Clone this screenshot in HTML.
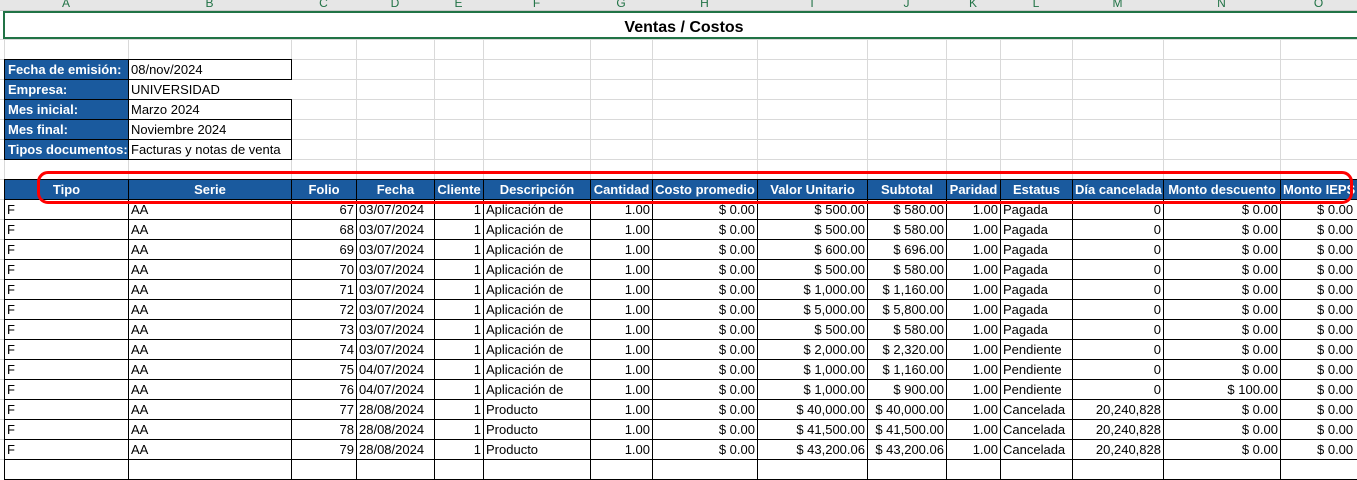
<!DOCTYPE html>
<html><head><meta charset="utf-8"><style>
*{margin:0;padding:0;box-sizing:border-box}
body{width:1357px;height:464px;overflow:hidden;background:#fff;position:relative;font-family:"Liberation Sans",sans-serif;font-size:13px;color:#000}
.grid{position:absolute;left:0;top:39px;width:1357px;height:425px;background:repeating-linear-gradient(to bottom,#d9d9d9 0,#d9d9d9 1px,transparent 1px,transparent 20px)}
.vl{position:absolute;top:0;width:1px;height:464px;background:#d9d9d9}
.colhdr{position:absolute;left:0;top:0;width:1357px;height:11px;background:#e6e6e6;border-bottom:1px solid #c8c8c8;overflow:hidden}
.colhdr span{position:absolute;top:-4px;font-size:12px;color:#217346;text-align:center}
.title{position:absolute;left:3px;top:11px;width:1360px;height:28px;border-top:2px solid #217346;border-bottom:2px solid #217346;border-left:2px solid #217346;background:#fff;text-align:center;font-weight:bold;font-size:16px;line-height:24px;padding-top:3px}
table{position:absolute;border-collapse:collapse;table-layout:fixed}
td{height:20px;border:1px solid #000;padding:0 2px;white-space:nowrap;overflow:hidden;line-height:18px;font-size:13px}
.info td.l{background:#1a5a9e;color:#fff;font-weight:bold;padding-left:3px}
.data td{text-align:right}
.data td.t{text-align:left}
.data tr.h td{background:#1a5a9e;color:#fff;font-weight:bold;text-align:center}
.red{position:absolute;left:37px;top:171px;width:1316px;height:33px;border:3px solid #f00;border-radius:11px}
</style></head><body>
<div class="grid"></div>
<div class="vl" style="left:4px"></div><div class="vl" style="left:128px"></div><div class="vl" style="left:291px"></div><div class="vl" style="left:356px"></div><div class="vl" style="left:434px"></div><div class="vl" style="left:483px"></div><div class="vl" style="left:590px"></div><div class="vl" style="left:652px"></div><div class="vl" style="left:757px"></div><div class="vl" style="left:867px"></div><div class="vl" style="left:946px"></div><div class="vl" style="left:1000px"></div><div class="vl" style="left:1072px"></div><div class="vl" style="left:1163px"></div><div class="vl" style="left:1280px"></div>
<div class="colhdr">
<span style="left:4px;width:124px">A</span><span style="left:128px;width:163px">B</span><span style="left:291px;width:65px">C</span><span style="left:356px;width:78px">D</span><span style="left:434px;width:49px">E</span><span style="left:483px;width:107px">F</span><span style="left:590px;width:62px">G</span><span style="left:652px;width:105px">H</span><span style="left:757px;width:110px">I</span><span style="left:867px;width:79px">J</span><span style="left:946px;width:54px">K</span><span style="left:1000px;width:72px">L</span><span style="left:1072px;width:91px">M</span><span style="left:1163px;width:117px">N</span><span style="left:1280px;width:77px">O</span>
</div>
<div class="title">Ventas / Costos</div>
<table class="info" style="left:4px;top:59px;width:287px">
<colgroup><col style="width:124px"><col style="width:163px"></colgroup>
<tr><td class="l">Fecha de emisión:</td><td>08/nov/2024</td></tr>
<tr><td class="l">Empresa:</td><td style="border-right-color:#fff">UNIVERSIDAD</td></tr>
<tr><td class="l">Mes inicial:</td><td>Marzo 2024</td></tr>
<tr><td class="l">Mes final:</td><td>Noviembre 2024</td></tr>
<tr><td class="l">Tipos documentos:</td><td>Facturas y notas de venta</td></tr>
</table>
<table class="data" style="left:4px;top:179px;width:1400px">
<colgroup><col style="width:124px"><col style="width:163px"><col style="width:65px"><col style="width:78px"><col style="width:49px"><col style="width:107px"><col style="width:62px"><col style="width:105px"><col style="width:110px"><col style="width:79px"><col style="width:54px"><col style="width:72px"><col style="width:91px"><col style="width:117px"><col style="width:124px"></colgroup>
<tr class="h"><td>Tipo</td><td>Serie</td><td>Folio</td><td>Fecha</td><td>Cliente</td><td>Descripción</td><td>Cantidad</td><td>Costo promedio</td><td>Valor Unitario</td><td>Subtotal</td><td>Paridad</td><td>Estatus</td><td>Día cancelada</td><td>Monto descuento</td><td style="text-align:left">Monto IEPS</td></tr>
<tr><td class="t">F</td><td class="t">AA</td><td>67</td><td class="t">03/07/2024</td><td>1</td><td class="t">Aplicación de</td><td>1.00</td><td>$ 0.00</td><td>$ 500.00</td><td>$ 580.00</td><td>1.00</td><td class="t">Pagada</td><td>0</td><td>$ 0.00</td><td style="text-align:left;padding-left:36px">$ 0.00</td></tr>
<tr><td class="t">F</td><td class="t">AA</td><td>68</td><td class="t">03/07/2024</td><td>1</td><td class="t">Aplicación de</td><td>1.00</td><td>$ 0.00</td><td>$ 500.00</td><td>$ 580.00</td><td>1.00</td><td class="t">Pagada</td><td>0</td><td>$ 0.00</td><td style="text-align:left;padding-left:36px">$ 0.00</td></tr>
<tr><td class="t">F</td><td class="t">AA</td><td>69</td><td class="t">03/07/2024</td><td>1</td><td class="t">Aplicación de</td><td>1.00</td><td>$ 0.00</td><td>$ 600.00</td><td>$ 696.00</td><td>1.00</td><td class="t">Pagada</td><td>0</td><td>$ 0.00</td><td style="text-align:left;padding-left:36px">$ 0.00</td></tr>
<tr><td class="t">F</td><td class="t">AA</td><td>70</td><td class="t">03/07/2024</td><td>1</td><td class="t">Aplicación de</td><td>1.00</td><td>$ 0.00</td><td>$ 500.00</td><td>$ 580.00</td><td>1.00</td><td class="t">Pagada</td><td>0</td><td>$ 0.00</td><td style="text-align:left;padding-left:36px">$ 0.00</td></tr>
<tr><td class="t">F</td><td class="t">AA</td><td>71</td><td class="t">03/07/2024</td><td>1</td><td class="t">Aplicación de</td><td>1.00</td><td>$ 0.00</td><td>$ 1,000.00</td><td>$ 1,160.00</td><td>1.00</td><td class="t">Pagada</td><td>0</td><td>$ 0.00</td><td style="text-align:left;padding-left:36px">$ 0.00</td></tr>
<tr><td class="t">F</td><td class="t">AA</td><td>72</td><td class="t">03/07/2024</td><td>1</td><td class="t">Aplicación de</td><td>1.00</td><td>$ 0.00</td><td>$ 5,000.00</td><td>$ 5,800.00</td><td>1.00</td><td class="t">Pagada</td><td>0</td><td>$ 0.00</td><td style="text-align:left;padding-left:36px">$ 0.00</td></tr>
<tr><td class="t">F</td><td class="t">AA</td><td>73</td><td class="t">03/07/2024</td><td>1</td><td class="t">Aplicación de</td><td>1.00</td><td>$ 0.00</td><td>$ 500.00</td><td>$ 580.00</td><td>1.00</td><td class="t">Pagada</td><td>0</td><td>$ 0.00</td><td style="text-align:left;padding-left:36px">$ 0.00</td></tr>
<tr><td class="t">F</td><td class="t">AA</td><td>74</td><td class="t">03/07/2024</td><td>1</td><td class="t">Aplicación de</td><td>1.00</td><td>$ 0.00</td><td>$ 2,000.00</td><td>$ 2,320.00</td><td>1.00</td><td class="t">Pendiente</td><td>0</td><td>$ 0.00</td><td style="text-align:left;padding-left:36px">$ 0.00</td></tr>
<tr><td class="t">F</td><td class="t">AA</td><td>75</td><td class="t">04/07/2024</td><td>1</td><td class="t">Aplicación de</td><td>1.00</td><td>$ 0.00</td><td>$ 1,000.00</td><td>$ 1,160.00</td><td>1.00</td><td class="t">Pendiente</td><td>0</td><td>$ 0.00</td><td style="text-align:left;padding-left:36px">$ 0.00</td></tr>
<tr><td class="t">F</td><td class="t">AA</td><td>76</td><td class="t">04/07/2024</td><td>1</td><td class="t">Aplicación de</td><td>1.00</td><td>$ 0.00</td><td>$ 1,000.00</td><td>$ 900.00</td><td>1.00</td><td class="t">Pendiente</td><td>0</td><td>$ 100.00</td><td style="text-align:left;padding-left:36px">$ 0.00</td></tr>
<tr><td class="t">F</td><td class="t">AA</td><td>77</td><td class="t">28/08/2024</td><td>1</td><td class="t">Producto</td><td>1.00</td><td>$ 0.00</td><td>$ 40,000.00</td><td>$ 40,000.00</td><td>1.00</td><td class="t">Cancelada</td><td>20,240,828</td><td>$ 0.00</td><td style="text-align:left;padding-left:36px">$ 0.00</td></tr>
<tr><td class="t">F</td><td class="t">AA</td><td>78</td><td class="t">28/08/2024</td><td>1</td><td class="t">Producto</td><td>1.00</td><td>$ 0.00</td><td>$ 41,500.00</td><td>$ 41,500.00</td><td>1.00</td><td class="t">Cancelada</td><td>20,240,828</td><td>$ 0.00</td><td style="text-align:left;padding-left:36px">$ 0.00</td></tr>
<tr><td class="t">F</td><td class="t">AA</td><td>79</td><td class="t">28/08/2024</td><td>1</td><td class="t">Producto</td><td>1.00</td><td>$ 0.00</td><td>$ 43,200.06</td><td>$ 43,200.06</td><td>1.00</td><td class="t">Cancelada</td><td>20,240,828</td><td>$ 0.00</td><td style="text-align:left;padding-left:36px">$ 0.00</td></tr>
<tr><td class="t"></td><td></td><td></td><td></td><td></td><td></td><td></td><td></td><td></td><td></td><td></td><td></td><td></td><td></td><td></td></tr>
</table>
<div class="red"></div>
</body></html>
